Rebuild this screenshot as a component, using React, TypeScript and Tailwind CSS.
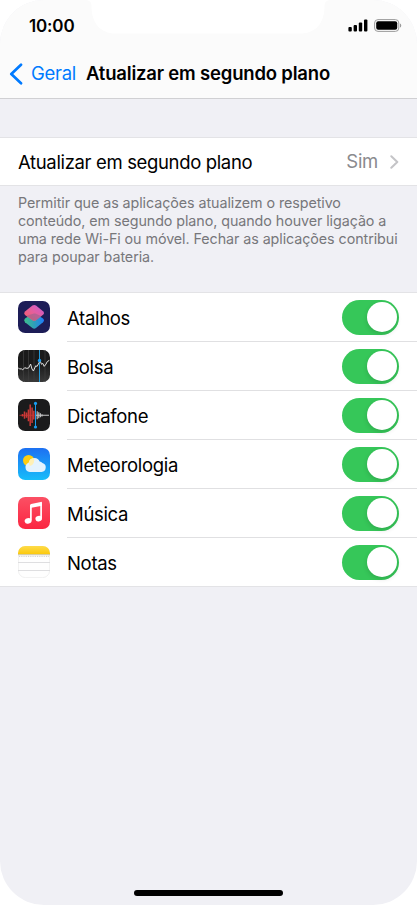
import type { ReactNode } from "react";

/* ── App icons (32x32) ─────────────────────────────────── */
function ShortcutsIcon() {
  return (
    <svg viewBox="0 0 32 32" className="size-8">
      <defs>
        <linearGradient id="sc-top" x1="0" y1="1" x2="1" y2="0">
          <stop offset="0" stopColor="#fb5c5c" />
          <stop offset="0.5" stopColor="#e65f9c" />
          <stop offset="1" stopColor="#c65ad8" />
        </linearGradient>
        <linearGradient id="sc-bottom" x1="0" y1="0" x2="1" y2="0">
          <stop offset="0" stopColor="#3fbf8c" />
          <stop offset="0.5" stopColor="#2e9fb8" />
          <stop offset="1" stopColor="#1f7cfb" />
        </linearGradient>
      </defs>
      <rect width="32" height="32" rx="7.2" fill="#1d1d57" />
      <path d="M7 17.6 15 12.4Q16.2 11.8 17.4 12.4L25 17.6Q27 19.4 25 21.2L18 27Q16.2 28.4 14.4 27L7 21.2Q5.2 19.4 7 17.6Z" fill="url(#sc-bottom)" />
      <path d="M7 10.4 14.4 4.6Q16.2 3.4 18 4.6L25 10.2Q27 12 25 13.8L18 19.2Q16.2 20.4 14.4 19.2L7 14Q5.2 12.2 7 10.4Z" fill="url(#sc-top)" />
      <path d="m16 12.4 1.4.2 6 2.6-5.4 4-1.8.6-1.8-.8-6-4.2z" fill="#96648f" opacity="0.6" />
    </svg>
  );
}

function StocksIcon() {
  return (
    <svg viewBox="0 0 32 32" className="size-8">
      <defs>
        <linearGradient id="st-bg" x1="0" y1="0" x2="0" y2="1">
          <stop offset="0.45" stopColor="#1a1a1a" />
          <stop offset="1" stopColor="#393939" />
        </linearGradient>
      </defs>
      <rect width="32" height="32" rx="7.2" fill="url(#st-bg)" />
      <path d="M5.5 0v32M10.5 0v32M16 0v32M27 0v32" stroke="#3c3c3c" strokeWidth="0.8" />
      <path d="M21.5 0v32" stroke="#2499d5" strokeWidth="1" />
      <path d="m0 17.5 1.5 1.5 1.8-.2 1.4 1.1 2-2.2 2.2.7 1.8-.5 1.9-3.9 1.4 5 1.4 2 2.3-5.2 1.4.6 2.3-4.3.5-1.8 1.6 4 1.3-.9 1.4 3 1.8-2.3 1.3-2.6 2-1.1" fill="none" stroke="#e0e0e0" strokeWidth="1" />
      <circle cx="21.5" cy="10.5" r="1.7" fill="#1c9cee" />
    </svg>
  );
}

function VoiceIcon() {
  return (
    <svg viewBox="0 0 32 32" className="size-8">
      <rect width="32" height="32" rx="7.2" fill="#1b1b1c" />
      <path d="M1.5 16.3h15" stroke="#b92f2e" strokeWidth="0.9" />
      <path d="M4.5 15v2.6M6.5 12.6v7.2M8.5 13.6v5.2M10.4 10.4v11.8M12.2 5.6V27M14.1 8.4v15.7M15.8 11.8v8.8" stroke="#cb3836" strokeWidth="1.5" />
      <path d="M19.2 12.3v8M20.8 13.3v6M22.4 14.3v4M24 15.2v2.2M18 16.3h13" stroke="#c6c6c6" strokeWidth="1.1" />
      <path d="M17.5 4.5v23.5" stroke="#1a9df0" strokeWidth="1" />
      <circle cx="17.5" cy="4.4" r="1.6" fill="#1a9df0" />
      <circle cx="17.5" cy="28" r="1.6" fill="#1a9df0" />
    </svg>
  );
}

function WeatherIcon() {
  return (
    <svg viewBox="0 0 32 32" className="size-8">
      <defs>
        <linearGradient id="we-bg" x1="0" y1="0" x2="0" y2="1">
          <stop offset="0" stopColor="#1d70f2" />
          <stop offset="1" stopColor="#17bdfa" />
        </linearGradient>
      </defs>
      <rect width="32" height="32" rx="7.2" fill="url(#we-bg)" />
      <circle cx="10.6" cy="12.5" r="5.6" fill="#ffce11" />
      <path d="M11.7 24a4.8 4.8 0 0 1-1-9.3 5.8 5.8 0 0 1 11-1.1 4 4 0 0 1 2.7 1.4 4.6 4.6 0 0 1-.8 9z" fill="#e4f3fe" />
      <path d="M10.7 14.7a5.8 5.8 0 0 1 5.1-4.6 5.6 5.6 0 0 1-3.9 7.8z" fill="#fff0b5" />
    </svg>
  );
}

function MusicIcon() {
  return (
    <svg viewBox="0 0 32 32" className="size-8">
      <defs>
        <linearGradient id="mu-bg" x1="0" y1="0" x2="0" y2="1">
          <stop offset="0" stopColor="#fb5064" />
          <stop offset="1" stopColor="#fb2641" />
        </linearGradient>
      </defs>
      <rect width="32" height="32" rx="7.2" fill="url(#mu-bg)" />
      <path d="M12.9 23.5V9L23.1 6.9v14" fill="none" stroke="#fff" strokeWidth="1.7" />
      <path d="M12.1 8.1Q12.1 7.1 13.1 6.9L22.8 4.9Q24 4.7 24 5.8V8.7L12.1 11.1Z" fill="#fff" />
      <ellipse cx="10.1" cy="23.9" rx="3.5" ry="2.8" fill="#fff" transform="rotate(-16 10.1 23.9)" />
      <ellipse cx="20.7" cy="21.6" rx="3.3" ry="2.7" fill="#fff" transform="rotate(-16 20.7 21.6)" />
    </svg>
  );
}

function NotesIcon() {
  return (
    <svg viewBox="0 0 32 32" className="size-8">
      <defs>
        <linearGradient id="no-bar" x1="0" y1="0" x2="0" y2="1">
          <stop offset="0" stopColor="#fedb4a" />
          <stop offset="1" stopColor="#fcc90b" />
        </linearGradient>
      </defs>
      <rect x="0.4" y="0.4" width="31.2" height="31.2" rx="7" fill="#fefefe" stroke="#ececec" strokeWidth="0.8" />
      <path d="M0 8.2V7.2A7.2 7.2 0 0 1 7.2 0h17.6A7.2 7.2 0 0 1 32 7.2v1z" fill="url(#no-bar)" />
      <path d="M0 8.7h32" stroke="#cfc49a" strokeWidth="1" />
      <path d="M1 10.4h30" stroke="#d0d0d0" strokeWidth="1.1" strokeDasharray="0.9 0.9" />
      <path d="M0 16.5h32M0 24.5h32" stroke="#dadadd" strokeWidth="0.9" />
    </svg>
  );
}

const APPS: { name: string; icon: ReactNode }[] = [
  { name: "Atalhos", icon: <ShortcutsIcon /> },
  { name: "Bolsa", icon: <StocksIcon /> },
  { name: "Dictafone", icon: <VoiceIcon /> },
  { name: "Meteorologia", icon: <WeatherIcon /> },
  { name: "Música", icon: <MusicIcon /> },
  { name: "Notas", icon: <NotesIcon /> },
];

function Toggle() {
  return (
    <button
      type="button"
      role="switch"
      aria-checked="true"
      className="flex h-[35px] w-[57px] shrink-0 items-center justify-end rounded-full bg-[#36c759] pr-[2px]"
    >
      <span className="size-[30.5px] rounded-full bg-white shadow-[0_2px_5px_rgba(0,0,0,0.14)]" />
    </button>
  );
}

function StatusBar() {
  return (
    <div className="flex h-[50px] items-start justify-between pr-[15px] pl-[29px]">
      <span className="mt-[14px] text-[17px] leading-6 font-semibold tracking-[-0.15px]">10:00</span>
      <div className="mt-[19px] flex gap-[6px]">
        <svg viewBox="0 0 20 13" className="h-[13px] w-5">
          <rect x="0.4" y="8" width="3.4" height="4.6" rx="1" />
          <rect x="5.6" y="6" width="3.4" height="6.6" rx="1" />
          <rect x="10.8" y="3.5" width="3.4" height="9.1" rx="1" />
          <rect x="16" y="0.6" width="3.4" height="12" rx="1" />
        </svg>
        <svg viewBox="0 0 28 13" className="h-[13px] w-7">
          <rect x="0.6" y="0.6" width="24.2" height="11.8" rx="3.4" fill="none" stroke="#9b9b9b" strokeWidth="1" />
          <rect x="2.2" y="2.2" width="21" height="8.6" rx="2" />
          <path d="M26 4.4v4.2c1.7-.6 1.7-3.6 0-4.2z" fill="#9b9b9b" />
        </svg>
      </div>
    </div>
  );
}

export default function App() {
  return (
    <div className="h-[905px] w-[417px] overflow-hidden bg-white font-[Inter,sans-serif] text-black">
      <div className="relative flex h-full flex-col overflow-hidden rounded-[44px] bg-[#f0f0f5]">
        {/* Notch */}
        <svg viewBox="0 0 246 34" className="absolute top-0 left-[85px] h-[34px] w-[246px]" aria-hidden="true">
          <path d="M0 0C5 0 6.5 2 6.5 7 7 23 15 33.5 31 33.5H215C231 33.5 239 23 239.5 7 239.5 2 241 0 246 0Z" fill="#fff" />
        </svg>

        <header className="h-[99px] shrink-0 border-b border-[#d0d0d3] bg-[#fbfbfb]">
          <StatusBar />
          <nav className="flex h-[47px] items-center pl-[9px]">
            <svg viewBox="0 0 14 22" className="h-[22px] w-[14px] shrink-0">
              <path d="M12 1.8 2.3 11 12 20.2" fill="none" stroke="#007aff" strokeWidth="2.7" strokeLinecap="round" strokeLinejoin="round" />
            </svg>
            <span className="ml-2 w-[55px] pt-px text-[18.5px] tracking-[-0.3px] whitespace-nowrap text-[#007aff]">Geral</span>
            <h1 className="pt-px text-[18.5px] font-semibold tracking-[-0.19px] whitespace-nowrap">Atualizar em segundo plano</h1>
          </nav>
        </header>

        <main>
          <div className="mt-[38px] flex h-[49px] items-center border-y border-[#e3e3e6] bg-white pr-[18px] pl-[18px]">
            <span className="pt-[2px] text-[18.5px] tracking-[-0.35px] whitespace-nowrap">Atualizar em segundo plano</span>
            <span className="mr-[12px] ml-auto text-[18.5px] tracking-[-0.3px] text-[#8a8a8e]">Sim</span>
            <svg viewBox="0 0 9 14" className="h-[14px] w-[9px]">
              <path d="m1.3 1.2 6 5.8-6 5.8" fill="none" stroke="#c4c4c7" strokeWidth="2" strokeLinecap="round" strokeLinejoin="round" />
            </svg>
          </div>
          <p className="mt-[8px] h-[98px] pl-[18px] text-[14.3px] leading-[18px] tracking-[-0.07px] whitespace-nowrap text-[#77777b]">
            Permitir que as aplicações atualizem o respetivo<br />
            conteúdo, em segundo plano, quando houver ligação a<br />
            uma rede Wi-Fi ou móvel. Fechar as aplicações contribui<br />
            para poupar bateria.
          </p>

          <ul className="border-y border-[#e3e3e6] bg-white">
            {APPS.map((app, i) => (
              <li key={app.name} className="flex h-[49px] pl-[18px] last:h-12">
                <div className="flex h-12 w-[49px] shrink-0 items-center">{app.icon}</div>
                <div className={`flex flex-1 items-center justify-between pr-[17.6px] ${i < APPS.length - 1 ? "border-b border-[#e0e0e2]" : ""}`}>
                  <span className="pt-[3px] text-[18.5px] tracking-[-0.32px]">{app.name}</span>
                  <Toggle />
                </div>
              </li>
            ))}
          </ul>
        </main>

        <div className="mt-auto mb-[9px] h-[6px] w-[149px] shrink-0 self-center rounded-full bg-black" />
      </div>
    </div>
  );
}
